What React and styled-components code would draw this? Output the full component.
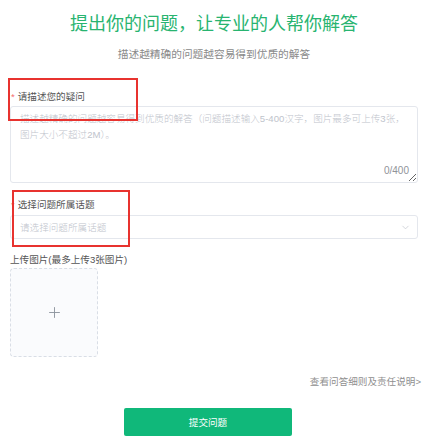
import styled, { createGlobalStyle } from 'styled-components';
import { ChevronDown, Plus } from 'lucide-react';

const GlobalStyle = createGlobalStyle`
  body {
    margin: 0;
    background: #fff;
    font-family: "Liberation Sans", "Noto Sans CJK SC", sans-serif;
  }
`;

const Page = styled.div`
  position: relative;
  display: flex;
  flex-direction: column;
  padding: 0 10px;
  width: 428px;
  box-sizing: border-box;
`;

const Title = styled.h1`
  margin: 12px 0 0;
  font-size: 18px;
  line-height: 24px;
  font-weight: 400;
  text-align: center;
  color: #28b470;
`;

const Subtitle = styled.p`
  margin: 10px 0 0;
  font-size: 10.7px;
  line-height: 16px;
  text-align: center;
  color: #8a8a8a;
`;

const Label = styled.div`
  margin-top: ${props => props.gap}px;
  padding-left: ${props => (props.required ? 1 : 0)}px;
  font-size: 9.6px;
  line-height: 14px;
  color: #555;

  &::before {
    content: ${props => (props.required ? "'*'" : 'none')};
    color: #f56c6c;
    margin-right: 3px;
  }
`;

const TextareaWrap = styled.div`
  position: relative;
  margin-top: 2px;
  height: 77px;
`;

const TextArea = styled.textarea`
  display: block;
  width: 100%;
  height: 100%;
  box-sizing: border-box;
  padding: 4px 9px;
  border: 1px solid #e4e7ed;
  border-radius: 3px;
  font-family: inherit;
  font-size: 9.6px;
  line-height: 16px;
  font-weight: 300;
  color: #333;
  resize: vertical;
  outline: none;

  &::placeholder {
    color: #c0c4cc;
  }
`;

const Counter = styled.span`
  position: absolute;
  right: 9px;
  bottom: 7px;
  font-size: 10px;
  color: #909399;
`;

const Select = styled.div`
  display: flex;
  align-items: center;
  justify-content: space-between;
  margin-top: 3px;
  height: 24px;
  box-sizing: border-box;
  padding: 0 6px 0 9px;
  border: 1px solid #e4e7ed;
  border-radius: 3px;
  font-size: 9.6px;
  font-weight: 300;
  color: #c0c4cc;
`;

const UploadBox = styled.div`
  display: flex;
  align-items: center;
  justify-content: center;
  margin-top: 1px;
  width: 88px;
  height: 89px;
  box-sizing: border-box;
  border: 1px dashed #d9dee6;
  border-radius: 4px;
  background: #fafbfd;
`;

const RulesLink = styled.a`
  align-self: flex-end;
  margin: 18px -3px 0 0;
  font-size: 9.6px;
  line-height: 14px;
  color: #8f8f8f;
  text-decoration: none;
`;

const SubmitButton = styled.button`
  margin: 19px 0 0 114px;
  width: 168px;
  height: 28px;
  border: none;
  border-radius: 2px;
  background: #10b87a;
  color: #fff;
  font-family: inherit;
  font-size: 9.6px;
  cursor: pointer;
`;

const Annotation = styled.div`
  position: absolute;
  left: ${props => props.x}px;
  top: ${props => props.y}px;
  width: ${props => props.w}px;
  height: ${props => props.h}px;
  box-sizing: border-box;
  border: 2px solid #e8332f;
  pointer-events: none;
`;

export default function App() {
  return (
    <>
      <GlobalStyle />
      <Page>
        <Title>提出你的问题，让专业的人帮你解答</Title>
        <Subtitle>描述越精确的问题越容易得到优质的解答</Subtitle>

        <Label required gap={28}>请描述您的疑问</Label>
        <TextareaWrap>
          <TextArea placeholder="描述越精确的问题越容易得到优质的解答（问题描述输入5-400汉字，图片最多可上传3张，图片大小不超过2M）。" />
          <Counter>0/400</Counter>
        </TextareaWrap>

        <Label required gap={15}>选择问题所属话题</Label>
        <Select>
          <span>请选择问题所属话题</span>
          <ChevronDown size={11} color="#c0c4cc" strokeWidth={1.5} />
        </Select>

        <Label gap={14}>上传图片(最多上传3张图片)</Label>
        <UploadBox>
          <Plus size={17} color="#8c939d" strokeWidth={1.3} />
        </UploadBox>

        <RulesLink href="#">查看问答细则及责任说明&gt;</RulesLink>
        <SubmitButton>提交问题</SubmitButton>

        <Annotation x={8} y={78} w={130} h={43} />
        <Annotation x={12} y={190} w={118} h={57} />
      </Page>
    </>
  );
}
